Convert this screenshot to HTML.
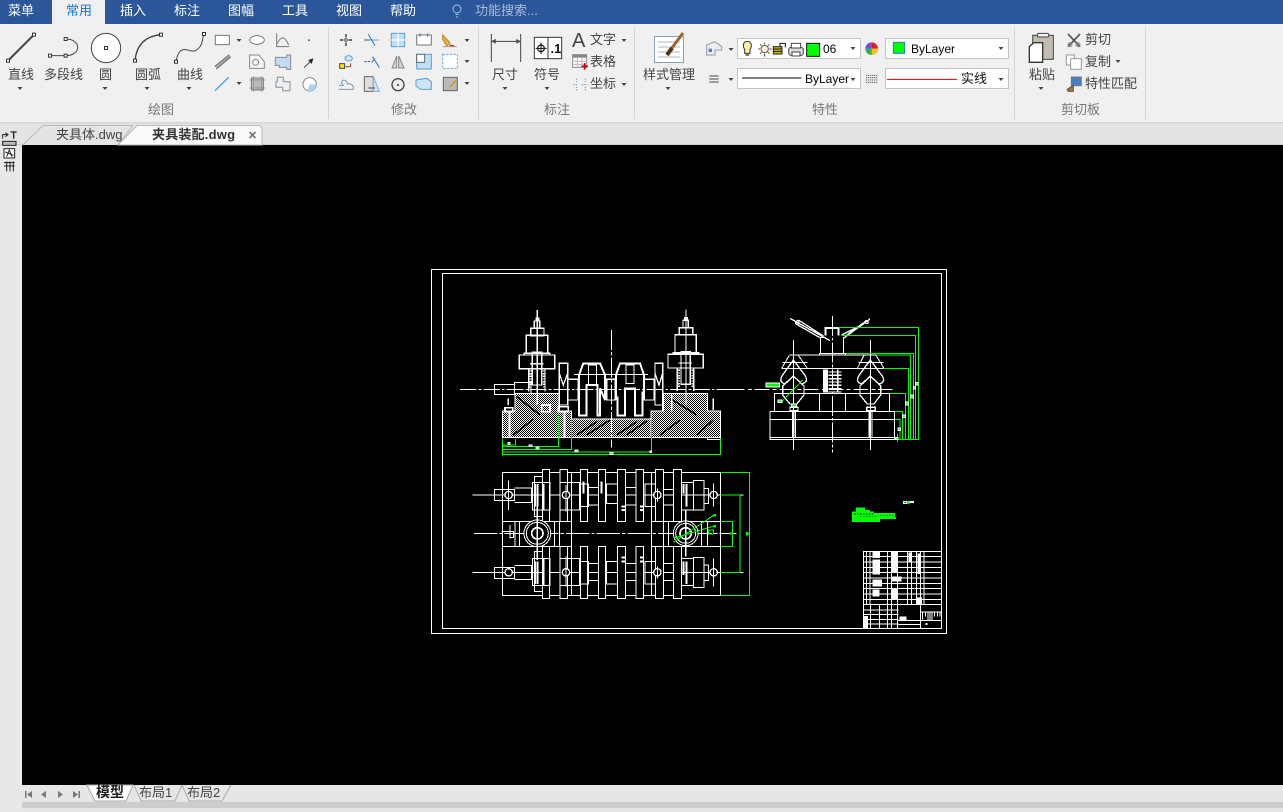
<!DOCTYPE html>
<html><head><meta charset="utf-8"><style>
html,body{margin:0;padding:0;background:#000;width:1283px;height:812px;overflow:hidden}
svg{display:block}
text{font-family:"Liberation Sans","Noto Sans CJK SC",sans-serif;font-size:13px;fill:#444}
.n{fill:#fff}
.g{fill:#777}
.b{fill:#000;font-size:12px}
.d{shape-rendering:crispEdges}
</style></head><body>
<svg width="1283" height="812" viewBox="0 0 1283 812" xmlns="http://www.w3.org/2000/svg">
<defs>
<pattern id="h" width="6" height="6" patternUnits="userSpaceOnUse"><rect width="6" height="6" fill="#000"/><rect width="3" height="3" fill="#fff"/><rect x="3" y="3" width="3" height="3" fill="#fff"/></pattern>
<pattern id="gh" width="3" height="3" patternUnits="userSpaceOnUse"><rect width="3" height="3" fill="#c4c4c4"/><rect width="1.5" height="1.5" fill="#999"/></pattern>
<path id="tri" d="M-2.5,0H2.5L0,3Z" fill="#444"/>
<rect id="hd" x="-4.5" y="-4.5" width="9" height="9" fill="#fff" stroke="#333" stroke-width="3"/>
</defs>

<!-- chrome -->
<rect width="1283" height="24" fill="#2b579a"/>
<rect y="24" width="1283" height="98" fill="#f0f0f0"/>
<rect y="122" width="1283" height="1.5" fill="#d6d6d6"/>
<rect y="123.5" width="1283" height="21.5" fill="#e4e4e4"/>
<rect y="144" width="1283" height="1" fill="#d0d0d0"/>
<rect x="52" width="53" height="25" fill="#f0f0f0"/>
<rect y="145" width="22" height="667" fill="#e8e8e8"/>
<rect x="22" y="145" width="1261" height="640" fill="#000"/>
<rect x="22" y="785" width="1261" height="27" fill="#e6e6e6"/>
<rect x="22" y="802" width="1261" height="6" fill="#cdcdcd"/>

<text class="n" x="8" y="15">菜单</text>
<text x="66" y="15" style="fill:#1673d6">常用</text>
<text class="n" x="120" y="15">插入</text>
<text class="n" x="174" y="15">标注</text>
<text class="n" x="228" y="15">图幅</text>
<text class="n" x="282" y="15">工具</text>
<text class="n" x="336" y="15">视图</text>
<text class="n" x="390" y="15">帮助</text>
<text x="475" y="15" style="fill:#a9bcd8">功能搜索...</text>
<g fill="none" stroke="#a9bcd8"><circle cx="457" cy="9" r="4"/><path d="M455.5,14.500h3M456,17h2"/></g>

<!-- separators -->
<g fill="#d4d4d4"><rect x="328" y="27" width="1" height="92"/><rect x="478" y="27" width="1" height="92"/><rect x="634" y="27" width="1" height="92"/><rect x="1014" y="27" width="1" height="92"/><rect x="1145" y="27" width="1" height="92"/></g>

<!-- draw group icons: zoom coordinates -->
<g transform="scale(.33333)" fill="none" stroke="#444" stroke-width="3">
<path d="M24,182L102,104" stroke-width="6"/><use href="#hd" x="24" y="182"/><use href="#hd" x="102" y="104"/>
<path d="M150,167H197M197,117C245,117 245,167 197,167"/><use href="#hd" x="197" y="117"/><use href="#hd" x="150" y="167"/><use href="#hd" x="197" y="167"/>
<circle cx="318" cy="144" r="44" fill="#fff"/><use href="#hd" x="318" y="144"/>
<path d="M405,182C410,130 440,108 483,104" stroke-width="4"/><use href="#hd" x="405" y="182"/><use href="#hd" x="483" y="104"/>
<path d="M528,185C540,120 570,165 590,150C610,135 605,120 612,102"/><use href="#hd" x="528" y="185"/><use href="#hd" x="612" y="102"/>
<rect x="646" y="106" width="42" height="28" fill="#fff" stroke="#777"/>
<ellipse cx="771" cy="120" rx="22" ry="13" fill="#fff" stroke="#777"/>
<path d="M830,100V140H868M832,130C845,105 855,110 866,135" stroke="#777"/>
<rect x="925" y="118" width="5" height="5" fill="#555" stroke="none"/>
<path d="M645,200L688,165M649,206L692,170" stroke="#777" stroke-width="5"/>
<path d="M749,165H777L793,185V205H749Z" fill="#f5f5f5" stroke="#888"/><circle cx="767" cy="187" r="9" stroke="#888"/>
<path d="M826,172H860V165H872V208H860V202H838V196H826Z" fill="#c4daee" stroke="#889"/>
<path d="M912,203L936,180" stroke="#444"/><path d="M925,180L940,175L935,192Z" fill="#222" stroke="none"/>
<path d="M645,272L686,232" stroke="#3b9fe0" stroke-width="4"/>
<rect x="754" y="234" width="36" height="36" fill="url(#gh)" stroke="#777"/><path d="M748,240H796M748,264H796M760,228V276M784,228V276" stroke="#888" stroke-width="2"/>
<path d="M832,232H850V245H870V272H848V262H828V245H832Z" fill="#eee" stroke="#9aa8b4" stroke-width="4"/>
<circle cx="929" cy="253" r="20" fill="#fff" stroke="#888"/><path d="M929,253H949A20,20 0 0 1 922,272Z" fill="#a6d4f2" stroke="none"/>
</g>
<g><use href="#tri" x="20" y="87"/><use href="#tri" x="105" y="87"/><use href="#tri" x="147" y="87"/><use href="#tri" x="189" y="87"/><use href="#tri" x="239" y="39"/><use href="#tri" x="239" y="82"/></g>
<text x="8" y="79">直线</text><text x="44" y="79">多段线</text><text x="99" y="79">圆</text><text x="135" y="79">圆弧</text><text x="177" y="79">曲线</text>
<text class="g" x="148" y="114">绘图</text>

<!-- modify icons: zoom 2 coords -->
<g transform="translate(330,0) scale(.33333)" fill="none" stroke="#555" stroke-width="3">
<path d="M48,102V112M48,128V138M30,120H40M56,120H66" stroke-width="5"/><circle cx="48" cy="120" r="4"/>
<path d="M103,120H148" stroke="#5aa0dc"/><path d="M115,103L135,137" stroke="#1f6fc0"/><path d="M103,120H118" stroke="#555"/>
<rect x="184" y="100" width="40" height="40" fill="#bfe0f5" stroke="#5a9fd0"/><path d="M204,100V140M184,120H224" stroke="#fff" stroke-width="4"/>
<rect x="260" y="105" width="44" height="30" fill="#fff" stroke="#777"/><path d="M270,100V110M293,100V110" stroke="#1f6fc0"/>
<path d="M338,105L360,128L350,138L338,118Z" fill="#f0b030" stroke="#c08020"/><path d="M338,140H380" stroke="#999"/><path d="M358,135L372,138" stroke="#a03020" stroke-width="4"/>
<ellipse cx="56" cy="175" rx="11" ry="8" fill="#cfe4f5" stroke="#5a9fd0"/><rect x="29" y="191" width="15" height="14" fill="#ffe800" stroke="#444"/><path d="M46,200H62V190" stroke="#b04030"/>
<path d="M103,185H120" stroke="#555" stroke-dasharray="7 3"/><path d="M128,170L148,203M125,187L135,176" stroke="#1f6fc0"/>
<path d="M200,168V204L186,204ZM206,168V204L222,204Z" fill="#cfd6dc" stroke="#888"/>
<rect x="260" y="163" width="44" height="44" fill="#bfe0f5" stroke="#5a9fd0"/><rect x="260" y="163" width="24" height="24" fill="#fff" stroke="#666"/>
<rect x="338" y="163" width="44" height="42" fill="#fff" stroke="#67a9dc" stroke-dasharray="7 4"/>
<path d="M26,268H70C72,255 60,248 52,252C50,240 38,235 34,248L40,256H26" stroke="#6f9dc0"/>
<path d="M103,230H130V274H103Z" fill="#ddd" stroke="#666"/><path d="M130,230L148,274H130Z" fill="#cfe6f6" stroke="#6fb0dc"/><path d="M115,264H135" stroke="#444"/>
<circle cx="204" cy="254" r="18" stroke="#444" stroke-width="4"/><circle cx="204" cy="255" r="2" fill="#444"/>
<path d="M258,240L290,235L304,245V268H272L258,258Z" fill="#cde4f5" stroke="#5a9fd0"/>
<rect x="340" y="232" width="42" height="40" fill="url(#gh)" stroke="#666"/><path d="M360,262L380,240" stroke="#d89020" stroke-width="4"/>
<!-- dimension -->
<path d="M484,102V186M572,102V186M486,124H570" stroke="#444" stroke-width="3"/>
<path d="M486,124L496,119V129ZM570,124L560,119V129Z" fill="#444"/>
<rect x="613" y="112" width="82" height="64" fill="#fff" stroke="#333"/><path d="M654,112V176" stroke="#333"/>
<circle cx="633" cy="145" r="10" stroke="#111" stroke-width="3.500"/><path d="M617,145H650M633,128V162" stroke="#111"/>
<rect x="728" y="164" width="42" height="38" fill="#fff" stroke="#888"/><rect x="728" y="164" width="42" height="9" fill="#888" stroke="none"/><path d="M742,173V202M756,173V202M728,184H770M728,193H770" stroke="#bbb"/>
<path d="M754,199H774M764,189V209" stroke="#c00" stroke-width="5"/>
<path d="M740,236V246M740,260V272M766,236V246M766,260V272M730,254H744M756,254H772" stroke="#6f9dc0" stroke-dasharray="4 3"/>
</g>
<text x="550.500" y="53" style="font-size:13px;font-weight:bold;fill:#111">.1</text>
<g><use href="#tri" x="467" y="39"/><use href="#tri" x="467" y="60"/><use href="#tri" x="467" y="82"/><use href="#tri" x="505" y="87"/><use href="#tri" x="547" y="87"/><use href="#tri" x="624" y="39"/><use href="#tri" x="624" y="83"/></g>
<text x="572" y="47" style="font-size:20px;fill:#444">A</text>
<text x="590" y="44">文字</text><text x="590" y="66">表格</text><text x="590" y="88">坐标</text>
<text x="492" y="79">尺寸</text><text x="534" y="79">符号</text>
<text class="g" x="391" y="114">修改</text><text class="g" x="544" y="114">标注</text>

<!-- style -->
<g fill="none" stroke="#777">
<rect x="654.500" y="36.500" width="29" height="26" fill="#fff" stroke="#8aa0b4"/>
<path d="M658,42h22M658,47h22M658,52h22M658,57h22" stroke="#aab8c4"/>
<path d="M669,52L683,33" stroke="#a06030" stroke-width="3"/><path d="M667,55L672,48" stroke="#503010" stroke-width="4"/>
</g>
<text x="643" y="79">样式管理</text><use href="#tri" x="668" y="87"/>

<!-- properties -->
<g fill="#fff" stroke="#c4c4c4"><rect x="737.500" y="38.500" width="123" height="20"/><rect x="885.500" y="38.500" width="123" height="20"/><rect x="737.500" y="68.500" width="123" height="20"/><rect x="885.500" y="68.500" width="123" height="20"/></g>
<g transform="translate(660,0) scale(.33333)" fill="none" stroke="#444" stroke-width="3">
<path d="M140,135L165,125L185,140V150H165V165H140Z" fill="#e8eef4" stroke="#99a"/><rect x="146" y="146" width="10" height="10" fill="#4a80c0" stroke="none"/>
<path d="M262,124C275,124 277,138 270,148V160H254V148C247,138 249,124 262,124Z" fill="#fdeea0" stroke="#333"/><path d="M256,165H268" stroke-width="4"/>
<circle cx="314" cy="147" r="11" fill="#fff6d8" stroke="#555"/><path d="M314,128V133M314,161V170M295,147H300M328,147H335M300,133L304,137M328,133L324,137M300,161L304,157M328,161L324,157"/>
<rect x="340" y="140" width="26" height="22" fill="#c8b400" stroke="#222"/><path d="M340,147H366M340,154H366" stroke="#222"/><path d="M360,140V130H376V142" stroke="#111"/>
<rect x="386" y="142" width="44" height="24" rx="7" fill="#ddd" stroke="#444"/><rect x="394" y="130" width="28" height="14" fill="#fff" stroke="#444"/><rect x="396" y="156" width="24" height="12" fill="#fff" stroke="#444"/>
<rect x="440" y="130" width="39" height="39" fill="#0f0" stroke="#111" stroke-width="3"/>
<circle cx="635" cy="146" r="19" fill="#ddd" stroke="none"/>
<path d="M635,146L635,127A19,19 0 0 1 654,146Z" fill="#e02020" stroke="none"/><path d="M635,146L654,146A19,19 0 0 1 635,165Z" fill="#f0c020" stroke="none"/><path d="M635,146L635,165A19,19 0 0 1 616,146Z" fill="#30b050" stroke="none"/><path d="M635,146L616,146A19,19 0 0 1 635,127Z" fill="#7050d0" stroke="none"/>
<rect x="700" y="127" width="34" height="33" fill="#0f0" stroke="#2a7ad0"/>
<path d="M148,228H176M148,237H176M148,246H176"/>
<path d="M618,226H654M618,233H654M618,240H654M618,247H654" stroke="#666" stroke-dasharray="4 2"/>
<path d="M246,234H424" stroke="#000"/>
<path d="M681,238H891" stroke="#d00000"/>
<!-- clipboard -->
<rect x="1118" y="106" width="62" height="72" fill="#c3bdb0" stroke="#444"/><rect x="1132" y="100" width="34" height="11" rx="4" fill="#eee" stroke="#444"/>
<path d="M1108,140L1122,128H1148V187H1108Z" fill="#fff" stroke="#333" stroke-width="4"/>
<path d="M1224,102L1260,140M1260,102L1224,140" stroke="#555" stroke-width="5"/><circle cx="1230" cy="134" r="6" stroke="#888"/><circle cx="1254" cy="134" r="6" stroke="#888"/>
<rect x="1219" y="165" width="24" height="30" fill="#fff" stroke="#999"/><rect x="1232" y="176" width="32" height="32" fill="#fff" stroke="#999"/>
<rect x="1234" y="231" width="30" height="26" fill="#4a80c0" stroke="#777"/><path d="M1222,268L1240,256V274H1224Z" fill="#a87040" stroke="#654"/>
</g>
<g><use href="#tri" x="731" y="48"/><use href="#tri" x="731" y="78"/><use href="#tri" x="853" y="47"/><use href="#tri" x="853" y="78"/><use href="#tri" x="1001" y="47"/><use href="#tri" x="1001" y="78"/><use href="#tri" x="1118" y="60"/><use href="#tri" x="1041" y="87"/></g>
<text class="b" x="823" y="53">06</text><text class="b" x="911" y="53">ByLayer</text><text class="b" x="805" y="83">ByLayer</text>
<text x="961" y="83" style="fill:#111">实线</text>
<text class="g" x="812" y="114">特性</text>
<text x="1029" y="79">粘贴</text>
<text x="1085" y="44">剪切</text><text x="1085" y="66">复制</text><text x="1085" y="88">特性匹配</text>
<text class="g" x="1061" y="114">剪切板</text>

<!-- tabs -->
<path d="M23,145L43,125.500H133L118,145" fill="#e4e4e4" stroke="#b8b8b8"/>
<path d="M118,145L137,125.500H258Q262,125.500 262,130V145Z" fill="#fafafa" stroke="#b8b8b8"/>
<text x="56" y="139">夹具体.dwg</text>
<text x="152" y="139" style="font-weight:bold;fill:#333;letter-spacing:.2px">夹具装配.dwg</text>
<path d="M249.500,132L255.500,138M255.500,132L249.500,138" stroke="#666" stroke-width="1.500"/>

<!-- left tool -->
<g transform="translate(0,122) scale(.33333)" fill="none" stroke="#222" stroke-width="3">
<path d="M8,50V38H20M16,32L24,38L16,44"/><path d="M32,30H50M41,30V50" stroke-width="4"/>
<rect x="8" y="58" width="40" height="12" fill="#bbb"/>
<rect x="12" y="80" width="32" height="28" fill="#fff"/><path d="M20,104L28,84L36,104M16,90L40,100"/>
<path d="M12,122H44M20,118V148M30,118V148M40,118V148M12,132H44"/>
</g>

<!-- bottom -->
<path d="M87,785L95,801H126L133,785Z" fill="#fff" stroke="#aaa"/>
<path d="M134,785L141,801H175L182,785" fill="#e6e6e6" stroke="#aaa"/>
<path d="M182,785L189,801H222L231,785" fill="#e6e6e6" stroke="#aaa"/>
<text x="96" y="797" style="font-weight:bold;fill:#222;font-size:14px">模型</text><text x="139" y="797">布局1</text><text x="187" y="797">布局2</text>
<g fill="#777"><path d="M25,791h1.500v7H25ZM32,791v7l-5,-3.500Z"/><path d="M46,791v7l-5,-3.500Z"/><path d="M58,791v7l5,-3.500Z"/><path d="M73,791v7l5,-3.500ZM78.500,791H80v7h-1.500Z"/></g>

<!-- frame -->
<g fill="none" stroke="#fff" stroke-width="1" class="d">
<rect x="431.500" y="269.500" width="515" height="364"/>
<rect x="442.500" y="273.500" width="499" height="355"/>
</g>

<!-- front view -->
<g class="d" transform="translate(430,265) scale(.33333)" fill="none" stroke="#fff" stroke-width="3">
<path d="M217,438H255V385H388V438H425V462H663V438H698V385H833V438H872V518H217Z" fill="url(#h)"/>
<path d="M260,395L330,450M250,510L310,462M440,510L500,470M470,510L540,465M560,510L620,470M590,510L650,468M690,510L750,465M720,400L800,450M800,510L850,465" stroke="#000" stroke-width="5"/>
<path d="M238,438V518M404,438V518" stroke-width="6"/>
<path d="M425,462H663V518" stroke-width="3"/>
<rect x="193" y="358" width="60" height="31" fill="#000"/><rect x="253" y="352" width="50" height="33" fill="#000"/>
<path d="M90,373H930" stroke-width="3" stroke-dasharray="50 6 8 6"/>
<path d="M322,135V420M313,168H329V190H313ZM302,190H342V212H302ZM289,211H353V265H289ZM283,265H360V270H283ZM268,270H374V311H268ZM307,262H335V360H307ZM300,296H340M296,312V380M345,312V380M318,160H326V168H318Z" fill="none" stroke-width="4"/>
<path d="M296,318H304M296,326H304M296,334H304M296,342H304M296,350H304M296,358H304M296,366H304M339,318H347M339,326H347M339,334H347M339,342H347M339,350H347M339,358H347M339,366H347" stroke-width="4"/>
<g transform="translate(446,-2)"><path d="M322,135V420M313,168H329V190H313ZM302,190H342V212H302ZM289,211H353V265H289ZM283,265H360V270H283ZM268,270H374V311H268ZM307,262H335V360H307ZM300,296H340M296,312V380M345,312V380M318,160H326V168H318Z" stroke-width="4"/><path d="M296,318H304M296,326H304M296,334H304M296,342H304M296,350H304M296,358H304M296,366H304M339,318H347M339,326H347M339,334H347M339,342H347M339,350H347M339,358H347M339,366H347" stroke-width="4"/></g>
<path d="M388,295H413V420H388ZM675,295H698V420H675ZM414,343H445V405H414ZM530,343H556V405H530ZM642,343H672V405H642ZM388,325L400,360L413,325M675,325L687,360L698,325" stroke-width="4"/>
<path d="M447,330L460,295H510L525,330V405L510,370V452H502V360H470V452H447ZM558,330L570,295H630L642,330V405L637,380V452H615V370H585V452H562V395L558,405Z" stroke-width="6"/>
<path d="M475,300H500V360H475ZM588,300H612V355H588ZM432,328H654" />
<path d="M545,195V548" stroke-dasharray="60 6 10 6"/>
<path d="M235,400V420M850,400V435M225,428H248V440H225ZM335,420H360V440H335ZM385,425H415V440H385ZM700,390V440M725,390V440" stroke-width="5"/>
<rect x="832" y="518" width="40" height="6"/>
<g stroke="#0f0"><path d="M217,520V572M217,540H257V522M217,545H385V448M217,553H424V465M217,561H664V462M217,568H871V520"/></g>
<g fill="#0f0"><rect x="234" y="532" width="6" height="6"/><rect x="297" y="540" width="9" height="4"/><rect x="318" y="546" width="9" height="6"/><rect x="435" y="555" width="9" height="6"/><rect x="540" y="562" width="9" height="6"/><rect x="660" y="558" width="5" height="5"/></g>
</g>

<!-- side view -->
<g class="d" transform="translate(730,300) scale(.33333)" fill="none" stroke="#fff" stroke-width="3">
<path d="M0,268H490" stroke-dasharray="44 10 12 8"/>
<path d="M307,48V458" stroke-dasharray="60 6 8 6"/>
<path d="M190,120V450M421,120V450"/>
<path d="M286,106V84H326V106M286,84H326" stroke-width="6"/>
<path d="M180,55L300,122M205,60L280,108M195,70L270,113M340,115L420,57M350,105L410,62M335,105L400,72" stroke-width="4"/><circle cx="202" cy="67" r="5"/><circle cx="410" cy="66" r="5"/>
<path d="M272,160V112H286M340,112V160M268,160H346V165H268Z"/>
<path d="M178,165H438M225,205H460M155,205H225"/>
<path d="M178,166L155,205M205,166L232,205M402,166L382,205M438,166L462,205M158,188H232M385,188H460"/>
<path d="M190,180L160,222Q143,245 165,252L190,228L215,252Q240,245 222,222ZM421,180L390,222Q373,245 395,252L421,228L447,252Q472,245 452,222Z" stroke-width="4"/>
<path d="M190,228L222,258V285L200,312H180L158,285V258ZM421,228L452,258V285L432,312H412L390,285V258Z" stroke-width="4"/>
<path d="M283,208V278M290,208V278" stroke-width="7"/><path d="M295,216H334M295,226H334M295,236H334M295,246H334M295,256H334M295,266H334M280,276H334M323,208V278" stroke-width="4"/>
<path d="M133,280H478V334H133ZM268,280V334M346,280V334"/>
<path d="M120,334H494V418H120ZM120,358H494M120,412H494"/>
<path d="M188,334V412M196,334V412M418,334V412M426,334V412" stroke-width="4"/>
<path d="M180,322H204V332H180ZM410,322H436V332H410Z" stroke-width="4"/>
<g stroke="#0f0"><path d="M325,82H566V418H494M335,106H556V418M346,160H550V418M440,165H542V418M460,205H535V418M478,280H526V418M494,334H518V418M494,358H510V418M502,402V426M155,305L218,240"/></g>
<g fill="#0f0"><rect x="108" y="249" width="40" height="12"/><rect x="144" y="300" width="12" height="8"/><rect x="184" y="312" width="16" height="8"/><rect x="556" y="247" width="8" height="8"/><rect x="550" y="259" width="6" height="8"/><rect x="541" y="285" width="9" height="9"/><rect x="526" y="306" width="9" height="9"/><rect x="518" y="345" width="8" height="8"/><rect x="504" y="384" width="8" height="8"/><rect x="496" y="412" width="8" height="6"/></g>
</g>

<!-- plan view -->
<g class="d" transform="translate(460,460) scale(.33333)" fill="none" stroke="#fff" stroke-width="3">
<rect x="127" y="37" width="654" height="370"/>
<path d="M127,185H335M127,259H335M575,185H781M575,259H781M335,37V407M575,37V407M165,185V259M178,185V259M283,185V259M298,185V259M610,185V259M625,185V259M725,185V259M742,185V259"/>
<path d="M42,220H830" stroke-dasharray="70 6 10 6"/>
<path d="M37,105H850M37,337H850"/>
<path d="M247,28H269V185H247ZM300,28H322V185H300ZM361,28H383V185H361ZM415,28H437V185H415ZM472,28H497V185H472ZM528,28H550V185H528ZM586,28H611V185H586ZM640,28H665V185H640Z" fill="#000"/>
<path d="M247,259H269V416H247ZM300,259H322V416H300ZM361,259H383V416H361ZM415,259H437V416H415ZM472,259H497V416H472ZM528,259H550V416H528ZM586,259H611V416H586ZM640,259H665V416H640Z" fill="#000"/>
<path d="M218,68H270V150H218ZM300,68H358V150H300ZM358,72H385V140H358ZM385,82H415V135H385ZM440,72H472V130H440ZM497,82H528V135H497ZM555,72H586V140H555ZM611,88H640V135H611ZM665,68H700V150H665ZM223,50H247V170H223Z"/>
<path d="M218,295H270V376H218ZM300,295H358V376H300ZM358,305H385V372H358ZM385,310H415V362H385ZM440,305H472V372H440ZM497,310H528V362H497ZM555,305H586V372H555ZM611,310H640V362H611ZM665,295H700V376H665ZM223,275H247V395H223Z"/>
<path d="M225,72V140M233,72V140M225,305V372M233,305V372M250,72V150M250,295V376M370,65V100M425,65V100M485,140H495M485,150H495M540,140H550M540,150H550M485,292H495M485,304H495M540,292H550M540,304H550M670,72V100M680,72V140M670,305V345M680,305V372" stroke-width="6"/>
<rect x="103" y="88" width="61" height="34"/><rect x="103" y="322" width="61" height="34"/>
<path d="M164,84H214V128H164M164,316H214V358H164M700,62H732V150H700ZM700,292H732V382H700ZM732,85H745V130H732ZM732,315H745V362H732Z"/>
<g fill="#000" stroke-width="4"><circle cx="146" cy="105" r="11"/><circle cx="146" cy="337" r="11"/><circle cx="761" cy="105" r="11"/><circle cx="761" cy="337" r="11"/><circle cx="318" cy="105" r="11"/><circle cx="592" cy="105" r="11"/><circle cx="318" cy="337" r="11"/><circle cx="592" cy="337" r="11"/></g>
<path d="M146,62V150M761,70V140M761,295V380M318,75V155M592,85V125M318,290V380M592,320V355"/>
<g fill="#000"><circle cx="232" cy="220" r="40"/><circle cx="677" cy="220" r="37"/></g>
<circle cx="232" cy="220" r="33"/><circle cx="232" cy="220" r="17" stroke-width="5"/><circle cx="677" cy="220" r="30"/><circle cx="677" cy="220" r="17" stroke-width="5"/>
<path d="M232,140V300M677,150V290" stroke-width="4"/>
<path d="M125,215H160V232H150M150,195V235"/>
<g stroke="#0f0"><path d="M781,37H868V407H781M781,105H840V337H781M781,185H818V259H781M640,247L762,165M640,235L762,198M745,210H760V222H745Z"/></g>
<g fill="#0f0" stroke="none"><rect x="760" y="162" width="8" height="8"/><rect x="760" y="195" width="8" height="8"/><rect x="858" y="216" width="8" height="10"/><rect x="808" y="218" width="8" height="6"/></g>
</g>

<!-- notes -->
<g transform="translate(840,490) scale(.33333)" class="d">
<rect x="189" y="33" width="12" height="9" fill="#fff"/><rect x="193" y="36" width="5" height="3" fill="#000"/><rect x="201" y="33" width="8" height="9" fill="#0f0"/><rect x="209" y="33" width="13" height="6" fill="#fff"/>
<path d="M48,52H75V60H90V64H102V69H165V81H168V87H120V96H36V64H48Z" fill="#0f0"/>
<path d="M42,72H100M60,80H110M120,76H160" stroke="#000" stroke-width="2" stroke-dasharray="5 4"/>
</g>

<!-- title block -->
<g class="d" transform="translate(840,490) scale(.33333)" fill="none" stroke="#fff" stroke-width="3">
<rect x="70" y="184" width="234" height="231"/>
<path d="M70,200H304M70,216H304M70,232H304M70,248H304M70,264H304M70,280H304M70,296H304M70,312H304M70,328H304M70,344H304"/>
<path d="M70,360H175M70,374H175M70,388H175M70,402H175M176,392H240M176,404H240M242,366H304M242,392H304"/>
<path d="M80,184V344M90,184V344M142,184V415M155,184V344M172,184V415M202,184V344M215,184V344M230,184V344M242,184V415M252,184V344M92,344V415M118,344V415M155,344V415"/>
<g fill="#fff" stroke="none"><rect x="98" y="186" width="22" height="18"/><rect x="154" y="186" width="18" height="30"/><rect x="98" y="208" width="22" height="46"/><rect x="154" y="218" width="18" height="30"/><rect x="98" y="268" width="28" height="22"/><rect x="154" y="260" width="30" height="14"/><rect x="98" y="298" width="20" height="22"/><rect x="154" y="296" width="20" height="34"/><rect x="232" y="190" width="8" height="62"/><rect x="206" y="188" width="8" height="26"/><rect x="230" y="322" width="16" height="20"/><rect x="70" y="378" width="14" height="36"/><rect x="178" y="380" width="22" height="10"/><rect x="256" y="399" width="6" height="6"/></g>
<path d="M248,368V388M256,368V380M264,368V390M270,368V390M276,368V390M284,368V380M292,368V380M300,368V380"/>
</g>
</svg>
</body></html>
